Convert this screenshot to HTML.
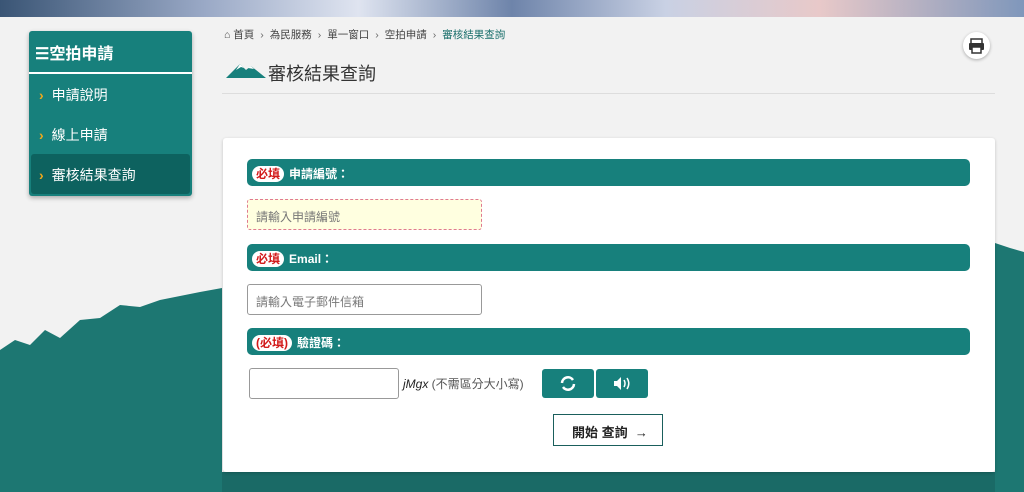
<!DOCTYPE html>
<html><head><meta charset="utf-8"><style>
*{box-sizing:border-box;margin:0;padding:0}
body{width:1024px;height:492px;overflow:hidden;background:#f2f2f2;font-family:"Liberation Sans","Noto Sans CJK TC",sans-serif;position:relative}
.sky{position:absolute;left:0;top:0;width:1024px;height:17px;background:linear-gradient(90deg,#3a5575 0%,#9aa9c6 20%,#dfe4f0 35%,#6e84aa 50%,#c9d1e4 65%,#e8c9c9 80%,#7f97bb 100%)}
.bg{position:absolute;left:0;top:0}
.side{position:absolute;left:29px;top:31px;width:163px;background:#17807c;border-radius:3px;box-shadow:0 2px 5px rgba(0,0,0,.3)}
.side .h{height:43px;border-bottom:2px solid #fff;color:#fff;font-size:16px;font-weight:bold;padding:9px 0 0 6px}
.side .i{height:40px;color:#fff;font-size:14px;padding:11px 0 0 10px}
.side .i b{color:#f0a81c;margin-right:8px}
.side .a{background:#0d625f;margin:0 2px 2px;border-radius:3px;padding-left:8px}
.bc{position:absolute;left:224px;top:27px;font-size:10.5px;color:#444}
.bc span{margin:0 6px;color:#666}
.title{position:absolute;left:226px;top:60px;font-size:18px;color:#333}
.hr{position:absolute;left:222px;top:93px;width:773px;border-top:1px solid #ddd}
.print{position:absolute;left:963px;top:32px;width:27px;height:27px;border-radius:50%;background:#fff;box-shadow:0 1px 3px rgba(0,0,0,.3)}
.card{position:absolute;left:223px;top:138px;width:772px;height:334px;background:#fff;border-radius:3px;box-shadow:0 1px 3px rgba(0,0,0,.2)}
.bar{position:absolute;left:24px;width:723px;height:27px;background:#17807c;border-radius:5px;color:#fff;font-size:12px;font-weight:bold;padding:6px 0 0 5px}
.bar i{font-style:normal;background:#fff;color:#d21a1a;border-radius:9px;padding:1px 4px;margin-right:5px;font-weight:bold}
.inp{position:absolute;left:24px;width:235px;height:31px;border:1px solid #999;border-radius:3px;font-size:12px;color:#777;padding:8px 0 0 8px}
.btn{position:absolute;top:231px;width:52px;height:29px;background:#17807c;border-radius:3px}
</style></head><body>
<svg class="bg" width="1024" height="492"><path d="M0 350 L15 340 L30 345 L45 330 L60 338 L80 320 L100 318 L120 305 L140 307 L160 300 L180 296 L200 292 L222 288 L222 492 L0 492Z" fill="#1d7772"/><path d="M995 243 L1010 248 L1024 252 L1024 492 L995 492Z" fill="#1d7772"/><rect x="222" y="472" width="773" height="20" fill="#1a6a66"/></svg>
<div class="sky"></div>
<div class="side"><div class="h">☰空拍申請</div><div class="i"><b>›</b>申請說明</div><div class="i"><b>›</b>線上申請</div><div class="i a"><b>›</b>審核結果查詢</div></div>
<div class="bc">⌂ 首頁<span>›</span>為民服務<span>›</span>單一窗口<span>›</span>空拍申請<span>›</span><font color="#1a6f6b">審核結果查詢</font></div>
<svg style="position:absolute;left:226px;top:62px" width="40" height="16"><path d="M0 16 L14 2 L20 8 L25 4 L40 16Z" fill="#17807c"/><path d="M10 8 L14 2 L18 6 L15 5Z M22 6 L25 4 L28 7Z" fill="#fff"/></svg>
<div class="title" style="left:268px">審核結果查詢</div>
<div class="hr"></div>
<div class="print"><svg width="27" height="27"><rect x="8" y="7" width="11" height="5" fill="none" stroke="#333" stroke-width="1.5"/><rect x="6" y="11" width="15" height="7" rx="1" fill="#333"/><rect x="9" y="15" width="9" height="6" fill="#fff" stroke="#333" stroke-width="1.5"/></svg></div>
<div class="card">
<div class="bar" style="top:21px"><i>必填</i>申請編號：</div>
<div class="inp" style="top:61px;background:#ffffe0;border:1px dashed #e07a90">請輸入申請編號</div>
<div class="bar" style="top:106px"><i>必填</i>Email：</div>
<div class="inp" style="top:146px">請輸入電子郵件信箱</div>
<div class="bar" style="top:190px"><i>(必填)</i>驗證碼：</div>
<div class="inp" style="top:230px;left:26px;width:150px"></div>
<div style="position:absolute;left:180px;top:237px;font-size:12px;color:#555"><i style="color:#222">jMgx</i> (不需區分大小寫)</div>
<div class="btn" style="left:319px"><svg width="52" height="29"><path d="M20 14 A6 6 0 0 1 31 11 M32 15 A6 6 0 0 1 21 18" fill="none" stroke="#fff" stroke-width="2.5"/></svg></div>
<div class="btn" style="left:373px"><svg width="52" height="29"><path d="M18 12h3l4-4v13l-4-4h-3z" fill="#fff"/><path d="M28 11q2 3.5 0 7M31 9q3.5 5.5 0 11" stroke="#fff" stroke-width="1.5" fill="none"/></svg></div>
<div style="position:absolute;left:330px;top:276px;width:110px;height:32px;border:1.5px solid #1a5f5c;font-size:13px;font-weight:bold;color:#222;padding:7px 0 0 18px">開始 查詢 &nbsp;→</div>
</div>
</body></html>
